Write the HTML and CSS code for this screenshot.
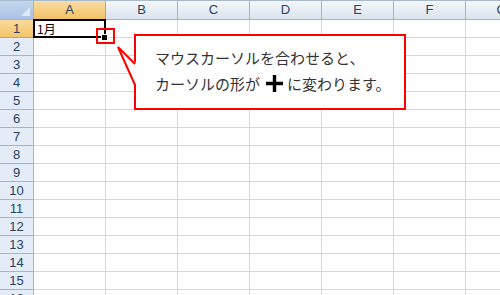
FILE: index.html
```html
<!DOCTYPE html>
<html lang="ja">
<head>
    <meta charset="UTF-8">
    <meta name="viewport" content="width=device-width, initial-scale=1.0">
    <title>オートフィル</title>
    <link rel="stylesheet" href="styles.css">
</head>
<body>
    <div class="sheet">
        <div class="row head">
            <div class="corner"><span class="corner-mark"></span></div>
            <div class="ch sel">A</div>
            <div class="ch">B</div>
            <div class="ch">C</div>
            <div class="ch">D</div>
            <div class="ch">E</div>
            <div class="ch">F</div>
            <div class="ch">G</div>
        </div>
        <div class="row"><div class="rh sel">1</div><div class="cells"><span class="cell-a">1月</span></div></div>
        <div class="row"><div class="rh">2</div><div class="cells"></div></div>
        <div class="row"><div class="rh">3</div><div class="cells"></div></div>
        <div class="row"><div class="rh">4</div><div class="cells"></div></div>
        <div class="row"><div class="rh">5</div><div class="cells"></div></div>
        <div class="row"><div class="rh">6</div><div class="cells"></div></div>
        <div class="row"><div class="rh">7</div><div class="cells"></div></div>
        <div class="row"><div class="rh">8</div><div class="cells"></div></div>
        <div class="row"><div class="rh">9</div><div class="cells"></div></div>
        <div class="row"><div class="rh">10</div><div class="cells"></div></div>
        <div class="row"><div class="rh">11</div><div class="cells"></div></div>
        <div class="row"><div class="rh">12</div><div class="cells"></div></div>
        <div class="row"><div class="rh">13</div><div class="cells"></div></div>
        <div class="row"><div class="rh">14</div><div class="cells"></div></div>
        <div class="row"><div class="rh">15</div><div class="cells"></div></div>
        <div class="row"><div class="rh">16</div><div class="cells"></div></div>
    </div>

    <!-- selected cell A1 and its fill handle -->
    <div class="selection"></div>
    <div class="fill-handle"></div>
    <div class="handle-mark"></div>

    <div class="callout">
        <p>マウスカーソルを合わせると、</p>
        <p>カーソルの形が<svg class="plus" width="17" height="17" viewBox="0 0 17 17"><path d="M8.5 0V17M0 8.5H17" stroke="#000" stroke-width="3.4"/></svg>に変わります。</p>
    </div>

    <svg class="tail" width="500" height="295" viewBox="0 0 500 295">
        <polygon points="137,64 118,47 137,85" fill="#fff"/>
        <rect x="132" y="65" width="6" height="19" fill="#fff"/>
        <polyline points="135,64 118,47 135,85" fill="none" stroke="#f00" stroke-width="2"/>
    </svg>
</body>
</html>
```

FILE: styles.css
```css
body {
    margin: 0;
    width: 500px;
    height: 295px;
    overflow: hidden;
    position: relative;
    background: #fff;
    font-family: "Liberation Sans", "Noto Sans CJK JP", sans-serif;
}

.sheet {
    width: 538px;
}

.row {
    display: flex;
    height: 18px;
}

.row.head {
    height: 20px;
    border-top: 1px solid #a7b9cf;
    box-sizing: border-box;
}

.corner {
    flex: 0 0 34px;
    box-sizing: border-box;
    border-right: 1px solid #9eb6ce;
    border-bottom: 1px solid #9eb6ce;
    background: linear-gradient(#c4d6ee, #a9c3e6);
    display: flex;
    align-items: flex-end;
    justify-content: flex-end;
    padding: 0 3px 3px 0;
}

.corner-mark {
    width: 9px;
    height: 9px;
    background: #dfe8f4;
    clip-path: polygon(100% 0, 100% 100%, 0 100%);
}

.ch {
    flex: 0 0 72px;
    box-sizing: border-box;
    border-right: 1px solid #9eb6ce;
    border-bottom: 1px solid #9eb6ce;
    background: linear-gradient(#f4f7fb, #dbe3ee);
    color: #27415f;
    font-size: 13px;
    line-height: 18px;
    text-align: center;
}

.ch.sel {
    background: linear-gradient(#f9dca6, #f2c263);
    border-right-color: #f29536;
    border-bottom-color: #f29536;
}

.rh {
    flex: 0 0 34px;
    box-sizing: border-box;
    border-right: 1px solid #9eb6ce;
    border-bottom: 1px solid #9eb6ce;
    background: #e4ecf7;
    color: #27415f;
    font-size: 13px;
    line-height: 17px;
    text-align: center;
}

.rh.sel {
    background: linear-gradient(#f9d99d, #f3c567);
    border-right-color: #f29536;
    border-bottom-color: #f29536;
}

.cells {
    flex: 1;
    border-bottom: 1px solid #d0d7e5;
    background: repeating-linear-gradient(to right, transparent 0 71px, #d0d7e5 71px 72px);
}

.cell-a {
    display: block;
    padding-left: 3px;
    font-family: "Noto Sans CJK JP", sans-serif;
    font-size: 12px;
    line-height: 17px;
    color: #000;
}

.selection {
    position: absolute;
    left: 33px;
    top: 19px;
    width: 73px;
    height: 19px;
    box-sizing: border-box;
    border: 2px solid #000;
}

.fill-handle {
    position: absolute;
    left: 101px;
    top: 34px;
    width: 5px;
    height: 5px;
    background: #000;
    border: 1px solid #fff;
}

.handle-mark {
    position: absolute;
    left: 96px;
    top: 28px;
    width: 19px;
    height: 16px;
    box-sizing: border-box;
    border: 2px solid #f00;
}

.callout {
    position: absolute;
    left: 134px;
    top: 34px;
    width: 272px;
    height: 76px;
    box-sizing: border-box;
    border: 2px solid #f00;
    background: #fff;
    padding: 9px 0 0 19px;
    font-family: "Noto Sans CJK JP", sans-serif;
    font-size: 15px;
    line-height: 26px;
    color: #333;
}

.callout p {
    margin: 0;
    white-space: nowrap;
}

.plus {
    vertical-align: -2px;
    margin: 0 4px 0 6px;
}

.tail {
    position: absolute;
    left: 0;
    top: 0;
    pointer-events: none;
}
```
